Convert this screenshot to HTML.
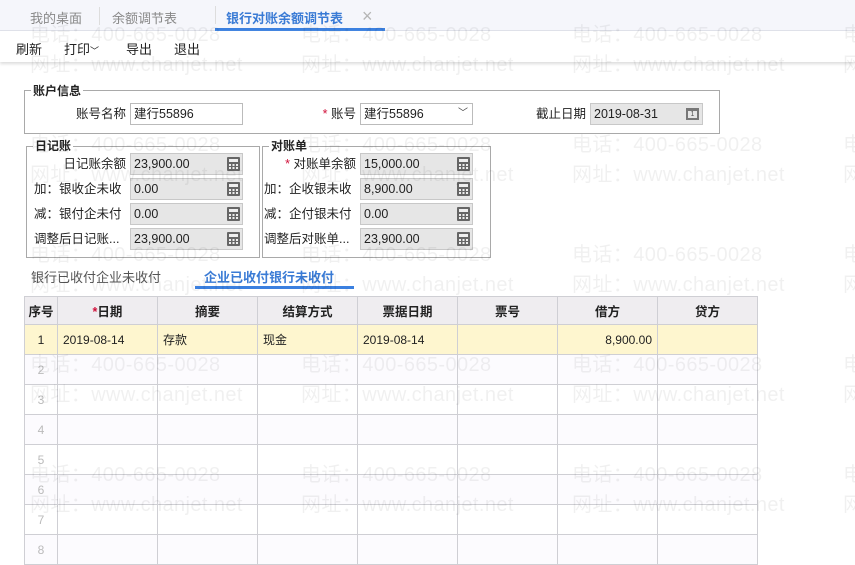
<!DOCTYPE html>
<html><head><meta charset="utf-8"><style>
*{box-sizing:border-box;margin:0;padding:0}
body{width:855px;height:553px;overflow:hidden;background:#fff;font-family:"Liberation Sans","Noto Sans CJK SC",sans-serif;font-size:13px;color:#222;position:relative}
.a{position:absolute;white-space:nowrap}
.tabbar{left:0;top:0;width:855px;height:31px;background:#f5f6fb;border-bottom:1px solid #dfe1ea}
.tool{left:0;top:31px;width:855px;height:31px;background:#fff;box-shadow:0 2px 3px #ddd}
fieldset{position:absolute;border:1px solid #a9a9a9}
.lg{position:absolute;background:#fff;font-weight:bold;font-size:12px;padding:0 2px;line-height:14px}
.in{position:absolute;height:22px;border:1px solid #bbb;background:#fff;font-size:12.5px;line-height:20px;padding-left:3px;width:113px}
.g{background:#e6e6e6;border-color:#c8c8c8}
.calc{position:absolute;right:2px;top:3px;width:13px;height:14px;background:#666;border-radius:1px}
.calc:before{content:"";position:absolute;left:2px;top:2px;width:9px;height:3px;background:#eee}
.calc:after{content:"";position:absolute;left:2px;top:7px;width:9px;height:5px;background:repeating-linear-gradient(90deg,#eee 0 2px,#666 2px 3.5px),#eee;-webkit-mask:repeating-linear-gradient(0deg,#000 0 2px,transparent 2px 3px);mask:repeating-linear-gradient(0deg,#000 0 2px,transparent 2px 3px)}
.lb{position:absolute;text-align:right;font-size:12.5px;line-height:22px}
.st{color:#d0103a}
table{position:absolute;left:24px;top:296px;border-collapse:collapse;font-size:12px}
td,th{border:1px solid #cfcfd4;width:100px;height:30px;padding:0 5px}
th{background:#efedf0;height:28px;font-weight:bold;font-size:12.5px}
td.n{width:33px;text-align:center;color:#bbb}
th.n{width:33px;padding:0 2px}
tr.y td{background:#fef6cf;color:#222}
tr.e td{background:#fcfbfe}
.wm{position:absolute;color:rgba(0,0,0,0.06);font-size:20px;letter-spacing:0.4px;white-space:nowrap;pointer-events:none;font-family:"Liberation Sans","Noto Sans CJK SC",sans-serif}
</style></head><body>
<div class="a tabbar"></div>
<div class="a" style="left:30px;top:8px;color:#888">我的桌面</div>
<div class="a" style="left:99px;top:7px;width:1px;height:18px;background:#ddd"></div>
<div class="a" style="left:112px;top:8px;color:#888">余额调节表</div>
<div class="a" style="left:215px;top:6px;width:1px;height:18px;background:#ddd"></div>
<div class="a" style="left:226px;top:8px;color:#3a7bd5;font-weight:bold">银行对账余额调节表</div>
<div class="a" style="left:362px;top:6px;color:#b5b5b5;font-size:18px;line-height:20px">×</div>
<div class="a" style="left:215px;top:28px;width:170px;height:3px;background:#3b80e0"></div>
<div class="a tool"></div>
<div class="a" style="left:16px;top:39px">刷新</div>
<div class="a" style="left:64px;top:39px">打印<span style="font-size:9px">﹀</span></div>
<div class="a" style="left:126px;top:39px">导出</div>
<div class="a" style="left:174px;top:39px">退出</div>

<fieldset style="left:24px;top:90px;width:696px;height:44px"></fieldset>
<div class="lg" style="left:31px;top:84px">账户信息</div>
<div class="lb" style="left:40px;top:103px;width:86px">账号名称</div>
<div class="in" style="left:130px;top:103px">建行55896</div>
<div class="lb" style="left:300px;top:103px;width:56px"><span class="st">* </span>账号</div>
<div class="in" style="left:360px;top:103px">建行55896<span style="position:absolute;right:4px;top:0;font-size:10px;color:#444">﹀</span></div>
<div class="lb" style="left:520px;top:103px;width:66px">截止日期</div>
<div class="in g" style="left:590px;top:103px">2019-08-31<span style="position:absolute;right:3px;top:4px;width:13px;height:12px;border:2px solid #777;border-top-width:3px;font-size:7px;line-height:7px;text-align:center;color:#555">1</span></div>

<fieldset style="left:26px;top:146px;width:234px;height:112px"></fieldset>
<div class="lg" style="left:33px;top:139px">日记账</div>
<fieldset style="left:262px;top:146px;width:229px;height:112px"></fieldset>
<div class="lg" style="left:269px;top:139px">对账单</div>

<div class="lb" style="left:30px;top:153px;width:96px">日记账余额</div>
<div class="in g" style="left:130px;top:153px">23,900.00<i class="calc"></i></div>
<div class="lb" style="left:30px;top:178px;width:96px;text-align:left;padding-left:4px">加：银收企未收</div>
<div class="in g" style="left:130px;top:178px">0.00<i class="calc"></i></div>
<div class="lb" style="left:30px;top:203px;width:96px;text-align:left;padding-left:4px">减：银付企未付</div>
<div class="in g" style="left:130px;top:203px">0.00<i class="calc"></i></div>
<div class="lb" style="left:30px;top:228px;width:96px;text-align:left;padding-left:4px">调整后日记账...</div>
<div class="in g" style="left:130px;top:228px">23,900.00<i class="calc"></i></div>

<div class="lb" style="left:262px;top:153px;width:94px"><span class="st">* </span>对账单余额</div>
<div class="in g" style="left:360px;top:153px">15,000.00<i class="calc"></i></div>
<div class="lb" style="left:262px;top:178px;width:96px;text-align:left;padding-left:2px">加：企收银未收</div>
<div class="in g" style="left:360px;top:178px">8,900.00<i class="calc"></i></div>
<div class="lb" style="left:262px;top:203px;width:96px;text-align:left;padding-left:2px">减：企付银未付</div>
<div class="in g" style="left:360px;top:203px">0.00<i class="calc"></i></div>
<div class="lb" style="left:262px;top:228px;width:96px;text-align:left;padding-left:2px">调整后对账单...</div>
<div class="in g" style="left:360px;top:228px">23,900.00<i class="calc"></i></div>

<div class="a" style="left:31px;top:267px;color:#555">银行已收付企业未收付</div>
<div class="a" style="left:204px;top:267px;color:#3a7bd5;font-weight:bold">企业已收付银行未收付</div>
<div class="a" style="left:195px;top:286px;width:159px;height:3px;background:#3b80e0"></div>

<table>
<tr><th class="n">序号</th><th><span class="st">*</span>日期</th><th>摘要</th><th>结算方式</th><th>票据日期</th><th>票号</th><th>借方</th><th>贷方</th></tr>
<tr class="y"><td class="n" style="color:#222">1</td><td>2019-08-14</td><td>存款</td><td>现金</td><td>2019-08-14</td><td></td><td style="text-align:right">8,900.00</td><td></td></tr>
<tr class="e"><td class="n">2</td><td></td><td></td><td></td><td></td><td></td><td></td><td></td></tr>
<tr><td class="n">3</td><td></td><td></td><td></td><td></td><td></td><td></td><td></td></tr>
<tr class="e"><td class="n">4</td><td></td><td></td><td></td><td></td><td></td><td></td><td></td></tr>
<tr><td class="n">5</td><td></td><td></td><td></td><td></td><td></td><td></td><td></td></tr>
<tr class="e"><td class="n">6</td><td></td><td></td><td></td><td></td><td></td><td></td><td></td></tr>
<tr><td class="n">7</td><td></td><td></td><td></td><td></td><td></td><td></td><td></td></tr>
<tr class="e"><td class="n">8</td><td></td><td></td><td></td><td></td><td></td><td></td><td></td></tr>
</table>

<div class="wm" style="left:30px;top:18px">电话：400-665-0028</div><div class="wm" style="left:301px;top:18px">电话：400-665-0028</div><div class="wm" style="left:572px;top:18px">电话：400-665-0028</div><div class="wm" style="left:843px;top:18px">电话：400-665-0028</div>
<div class="wm" style="left:30px;top:48px">网址：www.chanjet.net</div><div class="wm" style="left:301px;top:48px">网址：www.chanjet.net</div><div class="wm" style="left:572px;top:48px">网址：www.chanjet.net</div><div class="wm" style="left:843px;top:48px">网址：www.chanjet.net</div>
<div class="wm" style="left:30px;top:128px">电话：400-665-0028</div><div class="wm" style="left:301px;top:128px">电话：400-665-0028</div><div class="wm" style="left:572px;top:128px">电话：400-665-0028</div><div class="wm" style="left:843px;top:128px">电话：400-665-0028</div>
<div class="wm" style="left:30px;top:158px">网址：www.chanjet.net</div><div class="wm" style="left:301px;top:158px">网址：www.chanjet.net</div><div class="wm" style="left:572px;top:158px">网址：www.chanjet.net</div><div class="wm" style="left:843px;top:158px">网址：www.chanjet.net</div>
<div class="wm" style="left:30px;top:238px">电话：400-665-0028</div><div class="wm" style="left:301px;top:238px">电话：400-665-0028</div><div class="wm" style="left:572px;top:238px">电话：400-665-0028</div><div class="wm" style="left:843px;top:238px">电话：400-665-0028</div>
<div class="wm" style="left:30px;top:268px">网址：www.chanjet.net</div><div class="wm" style="left:301px;top:268px">网址：www.chanjet.net</div><div class="wm" style="left:572px;top:268px">网址：www.chanjet.net</div><div class="wm" style="left:843px;top:268px">网址：www.chanjet.net</div>
<div class="wm" style="left:30px;top:348px">电话：400-665-0028</div><div class="wm" style="left:301px;top:348px">电话：400-665-0028</div><div class="wm" style="left:572px;top:348px">电话：400-665-0028</div><div class="wm" style="left:843px;top:348px">电话：400-665-0028</div>
<div class="wm" style="left:30px;top:378px">网址：www.chanjet.net</div><div class="wm" style="left:301px;top:378px">网址：www.chanjet.net</div><div class="wm" style="left:572px;top:378px">网址：www.chanjet.net</div><div class="wm" style="left:843px;top:378px">网址：www.chanjet.net</div>
<div class="wm" style="left:30px;top:458px">电话：400-665-0028</div><div class="wm" style="left:301px;top:458px">电话：400-665-0028</div><div class="wm" style="left:572px;top:458px">电话：400-665-0028</div><div class="wm" style="left:843px;top:458px">电话：400-665-0028</div>
<div class="wm" style="left:30px;top:488px">网址：www.chanjet.net</div><div class="wm" style="left:301px;top:488px">网址：www.chanjet.net</div><div class="wm" style="left:572px;top:488px">网址：www.chanjet.net</div><div class="wm" style="left:843px;top:488px">网址：www.chanjet.net</div>
</body></html>
